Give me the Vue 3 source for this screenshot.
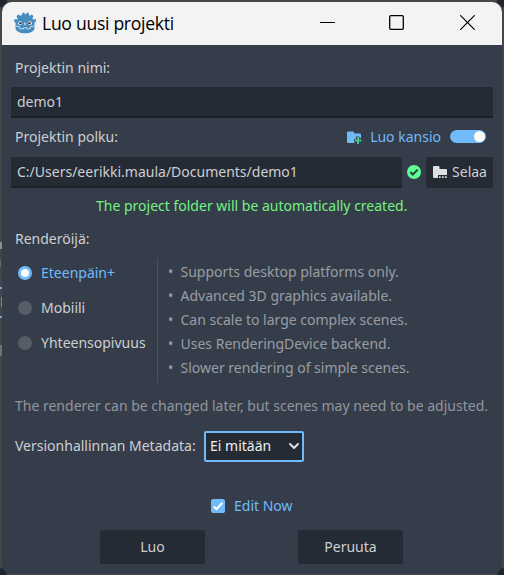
<script setup>
import { ref } from 'vue'

const name = ref('demo1')
const path = ref('C:/Users/eerikki.maula/Documents/demo1')
const renderer = ref('Eteenpäin+')
const renderers = ['Eteenpäin+', 'Mobiili', 'Yhteensopivuus']
const notes = [
  'Supports desktop platforms only.',
  'Advanced 3D graphics available.',
  'Can scale to large complex scenes.',
  'Uses RenderingDevice backend.',
  'Slower rendering of simple scenes.',
]
</script>

<template>
  <div class="desktop">
    <div class="window">
      <header class="titlebar">
        <svg class="logo" width="22" height="22" viewBox="0 0 22 22">
          <path fill="#478cbf" d="M8.3 1 10.3.5 10.8 2.3H12.2L12.7.5 14.7 1 15.1 3.2 16 3.7 17.8 2.4 19.5 4.2 18.6 6.1V7.4L21.8 7 22 9.6 20.5 10.4V16C20.5 19.2 16.5 21.3 11.2 21.3S1.5 19.2 1.5 16V10.4L0 9.6.5 7 3.5 7.4V6.1L2.4 4.2 4.3 2.4 6.5 3.7 7.8 3.2Z" />
          <path fill="none" stroke="#dcecf7" stroke-width=".8" d="M1.5 14.1 5.4 14.7 5.8 16.7 9.3 17 9.7 15.7H12.5L12.9 17 16.2 16.7 16.6 14.7 20.5 14.1" />
          <circle cx="6.2" cy="11.2" r="2" fill="#fff" />
          <circle cx="15.8" cy="11.2" r="2" fill="#fff" />
          <circle cx="6.5" cy="11.3" r="1.3" fill="#414042" />
          <circle cx="15.5" cy="11.3" r="1.3" fill="#414042" />
          <path stroke="#fff" stroke-width="1.1" d="M11 10.4v2.6" />
        </svg>
        <span class="title">Luo uusi projekti</span>
        <div class="controls">
          <svg width="15" height="15" viewBox="0 0 15 15"><path d="M0 7.5H15" stroke="#000" /></svg>
          <svg width="15" height="15" viewBox="0 0 15 15"><rect x=".7" y=".7" width="13.6" height="13.6" rx="1" fill="none" stroke="#000" stroke-width="1.3" /></svg>
          <svg width="15" height="15" viewBox="0 0 15 15"><path d="M.3.3 14.7 14.7M14.7.3.3 14.7" stroke="#000" stroke-width="1.2" /></svg>
        </div>
      </header>
      <main class="body">
        <div class="label name-label">Projektin nimi:</div>
        <div class="field">{{ name }}</div>
        <div class="path-head">
          <span class="label">Projektin polku:</span>
          <span class="create">
            <svg width="16" height="16" viewBox="0 0 16 16">
              <path fill="#70bafa" d="M1 3.5a1 1 0 0 1 1-1H7a1 1 0 0 1 1 1V4.5H14a1 1 0 0 1 1 1V9H13.5V7.5H10V10H8V13.5H9V14H2a1 1 0 0 1-1-1Z" />
              <path fill="#41c98c" d="M11 8h2v2.5h2.500v2H13V15h-2v-2.500H8.500v-2H11z" />
            </svg>
            <span class="create-text">Luo kansio</span>
            <i class="toggle"></i>
          </span>
        </div>
        <div class="path-row">
          <div class="field path">{{ path }}</div>
          <svg class="ok" width="14" height="14" viewBox="0 0 14 14">
            <circle cx="7" cy="7" r="7" fill="#5fff97" />
            <path d="m3.4 7 2.4 2.5L10.7 4.6" fill="none" stroke="#29413b" stroke-width="2" />
          </svg>
          <div class="button browse">
            <svg width="16" height="16" viewBox="0 0 16 16">
              <path fill="#e0e0e0" d="M1 3a1 1 0 0 1 1-1H6.500a1 1 0 0 1 1 1V5H14a1 1 0 0 1 1 1V11H6V14H2a1 1 0 0 1-1-1Z" />
              <path fill="#e0e0e0" d="M7 12.300h1.700V14H7zM10 12.300h1.700V14H10zM13 12.300h1.700V14H13z" />
            </svg>
            <span>Selaa</span>
          </div>
        </div>
        <div class="status">The project folder will be automatically created.</div>
        <div class="label render-label">Renderöijä:</div>
        <div class="options">
          <div class="radios">
            <div v-for="r in renderers" :key="r" class="radio" :class="{ on: r === renderer }" @click="renderer = r">
              <i></i><span>{{ r }}</span>
            </div>
          </div>
          <ul class="notes">
            <li v-for="n in notes" :key="n"><b>•</b><span>{{ n }}</span></li>
          </ul>
        </div>
        <div class="hint">The renderer can be changed later, but scenes may need to be adjusted.</div>
        <div class="meta">
          <span class="meta-label">Versionhallinnan Metadata:</span>
          <div class="select">
            <span>Ei mitään</span>
            <svg width="12" height="12" viewBox="0 0 12 12"><path d="M2 4l4 4 4-4" fill="none" stroke="#e0e0e0" stroke-width="2" stroke-linecap="round" stroke-linejoin="round" /></svg>
          </div>
        </div>
        <div class="edit">
          <svg width="14" height="14" viewBox="0 0 14 14"><rect width="14" height="14" rx="2" fill="#70bafa" /><path d="m2.700 7.400 2.800 2.700 5.800-6.200" fill="none" stroke="#fff" stroke-width="2.100" /></svg>
          <span>Edit Now</span>
        </div>
        <footer class="actions">
          <div class="button">Luo</div>
          <div class="button">Peruuta</div>
        </footer>
      </main>
    </div>
  </div>
</template>

<style>
body { background: #fff; overflow: hidden; }
</style>

<style scoped>
* { box-sizing: border-box; }
svg { display: block; flex: none; }
.desktop {
  width: 504px; height: 575px; padding: 2px 2px 1px;
  background:
    linear-gradient(#6fa9da, #6fa9da) 0 287px / 2px 2px no-repeat,
    linear-gradient(#6fa9da, #6fa9da) 0 316px / 2px 2px no-repeat,
    linear-gradient(#8c8d8e, #8c8d8e) 0 242px / 2px 7px no-repeat,
    linear-gradient(#66676a, #66676a) 0 260px / 1px 7px no-repeat,
    linear-gradient(#85868a, #85868a) 1px 297px / 1px 10px no-repeat,
    linear-gradient(#707173, #707173) 0 345px / 2px 11px no-repeat,
    radial-gradient(circle at 0 0, #20252d 6px, transparent 8px),
    radial-gradient(circle at 100% 0, #20252d 6px, transparent 8px),
    radial-gradient(circle at 0 100%, #20252d 6px, transparent 8px),
    radial-gradient(circle at 100% 100%, #20252d 6px, transparent 8px),
    #454648;
  font: 14px/20px "Noto Sans", sans-serif;
  color: #cdcfd2; white-space: nowrap;
}
.window { width: 500px; height: 572px; border-radius: 10px; overflow: hidden; background: #363d4a; }
.titlebar { height: 43px; display: flex; align-items: center; background: #f3f3f3; padding: 0 27px 2px 12px; }
.title { margin-left: 6px; font: 17.6px/24px "Open Sans", sans-serif; letter-spacing: -.3px; color: #000; }
.controls { margin-left: auto; display: flex; gap: 55px; }
.controls svg:nth-child(2) { margin: 0 1px 0 -1px; }
.body { padding: 10px 9px 0; }
.label { padding-left: 4px; }
.name-label { height: 32px; line-height: 26px; }
.field { height: 31px; padding: 0 6px; line-height: 30px; background: #252b34; border-bottom: 2px solid #1d2229; border-radius: 2px 2px 0 0; }
.path-head { height: 39px; display: flex; align-items: center; justify-content: space-between; padding: 0 7px 2px 0; }
.create { display: flex; align-items: center; color: #70bafa; }
.create-text { margin-left: 8px; }
.toggle { width: 36px; height: 13px; margin-left: 9px; border-radius: 7px; background: #70bafa; padding: 1px; display: flex; justify-content: flex-end; }
.toggle::after { content: ""; width: 11px; height: 11px; border-radius: 50%; background: #fff; }
.path-row { display: flex; align-items: center; }
.path { width: 391px; }
.ok { margin: 0 5px 1px; }
.button { display: flex; align-items: center; justify-content: center; background: #252b34; border-radius: 2px; }
.browse { width: 67px; height: 31px; gap: 4px; padding-bottom: 1px; }
.status { height: 36px; line-height: 36px; padding-left: 85px; color: #73f280; }
.render-label { height: 34px; line-height: 30px; }
.options { height: 125px; display: flex; }
.radios { width: 147px; border-right: 1px solid #4b515d; padding: 0 0 0 7px; }
.radio { height: 35px; display: flex; align-items: center; gap: 9px; }
.radio:first-child { height: 30px; }
.radio:nth-child(2) { height: 40px; }
.radio:nth-child(3) { height: 30px; }
.radio i { width: 14px; height: 14px; border-radius: 50%; background: #565d67; flex: none; }
.radio.on i { background: #fff; border: 3px solid #70bafa; }
.radio.on { color: #70bafa; }
.notes { list-style: none; margin: 0; padding: 2px 0 0 10px; color: #999da3; }
.notes li { height: 24px; line-height: 24px; display: flex; }
.notes b { width: 12.500px; font-weight: 400; }
.hint { height: 46px; line-height: 46px; padding-left: 4px; color: #92969d; }
.meta { height: 35px; display: flex; align-items: center; padding: 0 0 1px 4px; }
.meta-label { width: 189px; }
.select { width: 100px; height: 31px; border: 2px solid #70bafa; border-radius: 2px; background: #252b34; color: #eeeff0; display: flex; align-items: center; justify-content: space-between; padding: 0 2px 1px 4px; }
.edit { margin-top: 18px; height: 48px; display: flex; align-items: center; gap: 9px; padding-left: 200px; color: #70bafa; }
.actions { display: flex; gap: 93px; padding-left: 89px; }
.actions .button { width: 105px; height: 34px; }
</style>
